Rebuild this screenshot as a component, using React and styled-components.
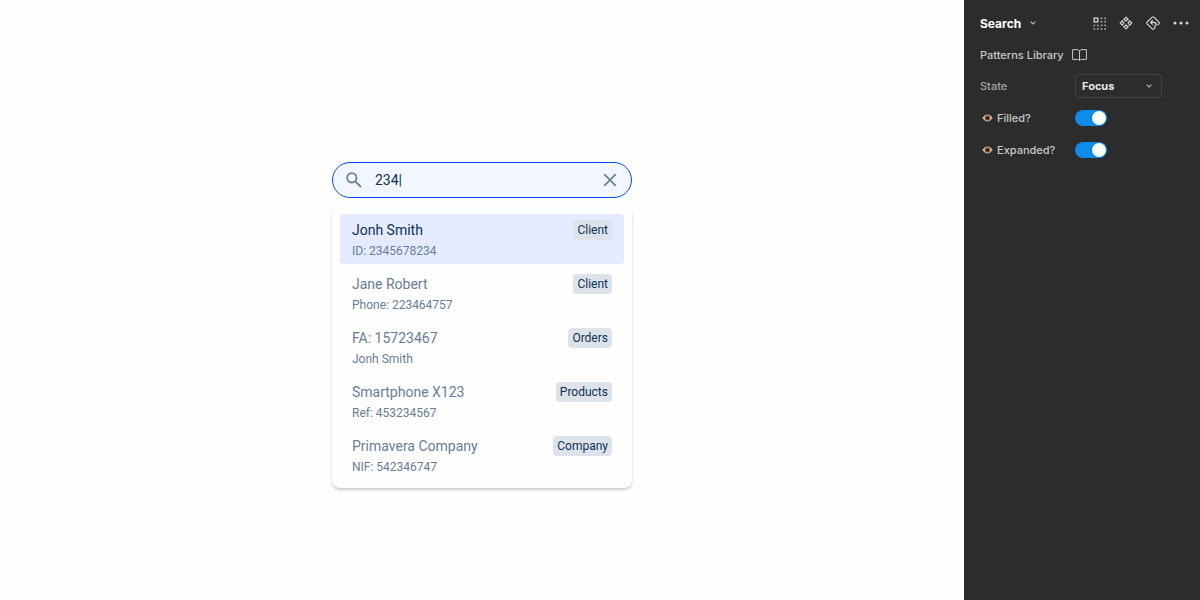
import { useState } from "react";
import styled, { createGlobalStyle } from "styled-components";

const results = [
  { title: "Jonh Smith", detail: "ID: 2345678234", tag: "Client" },
  { title: "Jane Robert", detail: "Phone: 223464757", tag: "Client" },
  { title: "FA: 15723467", detail: "Jonh Smith", tag: "Orders" },
  { title: "Smartphone X123", detail: "Ref: 453234567", tag: "Products" },
  { title: "Primavera Company", detail: "NIF: 542346747", tag: "Company" },
];

const SearchIcon = () => (
  <svg width="16" height="16" viewBox="0 0 16 16" fill="none" stroke="currentColor" strokeWidth="1.8">
    <circle cx="5.8" cy="5.8" r="4.7" />
    <path d="M9.3 9.3L15 15" />
  </svg>
);

const CloseIcon = () => (
  <svg width="14" height="14" viewBox="0 0 14 14" fill="none" stroke="currentColor" strokeWidth="1.7">
    <path d="M1.2 1.2L12.8 12.8M12.8 1.2L1.2 12.8" />
  </svg>
);

const ChevronIcon = () => (
  <svg width="6" height="4" viewBox="0 0 6 4" fill="none" stroke="#b8b8b8" strokeWidth="1.1">
    <path d="M0.6 0.6L3 3L5.4 0.6" />
  </svg>
);

const GridIcon = () => (
  <svg width="13" height="13" viewBox="0 0 13 13" fill="none" stroke="currentColor">
    <rect x="1.1" y="1.1" width="3.8" height="3.8" strokeWidth="1.3" />
    <path
      strokeWidth="0.9"
      d="M8.2 2.2V1H9.4M11.2 1H12.4V2.2M12.4 3.8V5H11.2M9.4 5H8.2V3.8M8.2 9.3V8.1H9.4M11.2 8.1H12.4V9.3M12.4 11V12.2H11.2M9.4 12.2H8.2V11M1 9.3V8.1H2.2M3.9 8.1H5.1V9.3M5.1 11V12.2H3.9M2.2 12.2H1V11"
    />
  </svg>
);

const ComponentIcon = () => (
  <svg width="14" height="14" viewBox="0 0 14 14" fill="none" stroke="currentColor" strokeWidth="1.2">
    <path
      strokeLinejoin="round"
      d="M7 1.2L8.9 3.1L7 5L5.1 3.1ZM7 9L8.9 10.9L7 12.8L5.1 10.9ZM3.1 5.1L5 7L3.1 8.9L1.2 7ZM10.9 5.1L12.8 7L10.9 8.9L9 7Z"
    />
    <path strokeWidth="0.9" d="M5.1 3.1L3.1 5.1M8.9 3.1L10.9 5.1M5.1 10.9L3.1 8.9M8.9 10.9L10.9 8.9" />
  </svg>
);

const ResetIcon = () => (
  <svg width="14" height="14" viewBox="0 0 14 14" fill="none" stroke="currentColor" strokeWidth="1.2">
    <path d="M9.2 11.5L7.8 12.9Q7 13.6 6.2 12.9L1.1 7.8Q0.4 7 1.1 6.2L6.2 1.1Q7 0.4 7.8 1.1L12.9 6.2Q13.6 7 12.9 7.8L11.6 9.1" />
    <path d="M6.8 4.2L4.6 6.4L6.8 8.6M4.8 6.4H8Q10.2 6.6 10.2 8.6Q10 10.4 7.8 10.4" />
  </svg>
);

const MoreIcon = () => (
  <svg width="16" height="4" viewBox="0 0 16 4" fill="currentColor">
    <circle cx="2" cy="2" r="1.5" />
    <circle cx="8" cy="2" r="1.5" />
    <circle cx="14" cy="2" r="1.5" />
  </svg>
);

const BookIcon = () => (
  <svg width="15" height="12" viewBox="0 0 15 12" fill="none" stroke="currentColor" strokeLinejoin="round">
    <path d="M7.5 2Q6.8 0.6 5 0.6H0.6V10.4H5.4Q6.9 10.4 7.5 11.5Q8.1 10.4 9.6 10.4H14.4V0.6H10Q8.2 0.6 7.5 2ZM7.5 2V11.4" />
  </svg>
);

const EyeIcon = () => (
  <svg width="11" height="8" viewBox="0 0 11 8">
    <path d="M0.4 4Q2.6 0.6 5.5 0.6Q8.4 0.6 10.6 4Q8.4 7.4 5.5 7.4Q2.6 7.4 0.4 4Z" fill="#cfc0b8" />
    <circle cx="5.5" cy="4" r="2.8" fill="#a4532f" />
    <circle cx="5.5" cy="4" r="1.6" fill="#24160f" />
  </svg>
);

const App = () => {
  const [query, setQuery] = useState("234|");
  const [state, setState] = useState("Focus");
  const [filled, setFilled] = useState(true);
  const [expanded, setExpanded] = useState(true);

  return (
    <Container>
      <GlobalStyle />
      <Stage>
        <Search>
          <SearchField>
            <SearchIcon />
            <SearchInput
              aria-label="Search"
              value={query}
              onChange={(e) => setQuery(e.target.value)}
            />
            <IconButton aria-label="Clear" onClick={() => setQuery("")}>
              <CloseIcon />
            </IconButton>
          </SearchField>
          <ResultList>
            {results.map((result, index) => (
              <li key={result.title}>
                <Result $active={index === 0}>
                  <ResultText>
                    <Title $active={index === 0}>{result.title}</Title>
                    <Detail>{result.detail}</Detail>
                  </ResultText>
                  <Tag>{result.tag}</Tag>
                </Result>
              </li>
            ))}
          </ResultList>
        </Search>
      </Stage>
      <Panel>
        <PanelHeader>
          <PanelTitle>
            Search
            <ChevronIcon />
          </PanelTitle>
          <Actions>
            <IconButton aria-label="Variants">
              <GridIcon />
            </IconButton>
            <IconButton aria-label="Main component">
              <ComponentIcon />
            </IconButton>
            <IconButton aria-label="Reset">
              <ResetIcon />
            </IconButton>
            <IconButton aria-label="More">
              <MoreIcon />
            </IconButton>
          </Actions>
        </PanelHeader>
        <LibraryLink href="#library">
          Patterns Library
          <BookIcon />
        </LibraryLink>
        <Property>
          <StateLabel htmlFor="state">State</StateLabel>
          <SelectBox>
            <Select id="state" value={state} onChange={(e) => setState(e.target.value)}>
              <option>Focus</option>
            </Select>
            <ChevronIcon />
          </SelectBox>
        </Property>
        <Property>
          <Label htmlFor="filled">
            <EyeIcon />
            Filled?
          </Label>
          <Toggle id="filled" checked={filled} onChange={() => setFilled(!filled)} />
        </Property>
        <Property>
          <Label htmlFor="expanded">
            <EyeIcon />
            Expanded?
          </Label>
          <Toggle id="expanded" checked={expanded} onChange={() => setExpanded(!expanded)} />
        </Property>
      </Panel>
    </Container>
  );
};

const GlobalStyle = createGlobalStyle`
  * {
    box-sizing: border-box;
  }

  body {
    margin: 0;
    background-color: #fefefe;
  }

  svg {
    display: block;
    flex-shrink: 0;
  }
`;

const Container = styled.div`
  min-height: 100vh;
  display: flex;
`;

const Stage = styled.main`
  flex: 1;
  padding: 162px 24px 24px;
  font-family: Roboto, sans-serif;
`;

const Search = styled.div`
  max-width: 300px;
  margin: 0 auto;

  display: flex;
  flex-direction: column;
  gap: 8px;
`;

const SearchField = styled.div`
  height: 36px;
  padding: 0 14px 0 13px;
  border: 1px solid #0047ff;
  border-radius: 18px;
  background-color: #f2f7ff;
  color: #6b7f95;

  display: flex;
  align-items: center;
  gap: 13px;
`;

const SearchInput = styled.input`
  flex: 1;
  min-width: 0;
  padding: 0;
  border: none;
  outline: none;
  background: none;
  color: #0a3259;
  font-family: inherit;
  font-size: 14px;
  line-height: 20px;
`;

const IconButton = styled.button`
  padding: 0;
  border: none;
  background: none;
  color: inherit;
  cursor: pointer;
`;

const ResultList = styled.ul`
  margin: 0;
  padding: 8px;
  border-radius: 8px;
  box-shadow: 0 2px 3px rgba(0, 0, 0, 0.2);
  list-style: none;

  display: flex;
  flex-direction: column;
  gap: 4px;
`;

const Result = styled.button`
  width: 100%;
  height: 50px;
  padding: 6px 12px;
  border: none;
  border-radius: 4px;
  background-color: ${(props) => (props.$active ? "#e5ebff" : "transparent")};
  font-family: inherit;
  text-align: left;
  cursor: pointer;

  display: flex;
  align-items: flex-start;
  justify-content: space-between;
`;

const ResultText = styled.span`
  display: flex;
  flex-direction: column;
  gap: 3px;
`;

const Title = styled.span`
  color: ${(props) => (props.$active ? "#0a3259" : "#677d96")};
  font-size: 14px;
  line-height: 20px;
`;

const Detail = styled.span`
  color: #677d96;
  font-size: 12px;
  line-height: 16px;
`;

const Tag = styled.span`
  padding: 0 4px;
  border-radius: 4px;
  background-color: #dee3ea;
  color: #0a3259;
  font-size: 12px;
  line-height: 20px;
`;

const Panel = styled.aside`
  width: 236px;
  padding: 11px 11px 12px 16px;
  background-color: #2c2c2c;
  color: #c8c8c8;
  font-family: Inter, sans-serif;
  font-size: 11px;
  font-weight: 500;

  display: flex;
  flex-direction: column;
  gap: 8px;
`;

const PanelHeader = styled.header`
  height: 24px;
  color: #d8d8d8;

  display: flex;
  align-items: center;
  justify-content: space-between;
`;

const PanelTitle = styled.h1`
  margin: 0;
  color: white;
  font-size: 12px;
  font-weight: 700;

  display: flex;
  align-items: center;
  gap: 9px;
`;

const Actions = styled.div`
  display: flex;
  align-items: center;
  gap: 13px;
`;

const LibraryLink = styled.a`
  height: 23px;
  color: inherit;
  text-decoration: none;

  display: flex;
  align-items: center;
  gap: 8px;
`;

const Property = styled.div`
  height: 24px;

  display: grid;
  grid-template-columns: 95px 87px;
  align-items: center;
`;

const Label = styled.label`
  padding-left: 2px;

  display: flex;
  align-items: center;
  gap: 4px;
`;

const StateLabel = styled.label`
  color: #a6a6a6;
`;

const SelectBox = styled.div`
  height: 24px;
  padding-right: 9px;
  border: 1px solid #434343;
  border-radius: 4px;
  color: #e6e6e6;

  display: flex;
  align-items: center;
`;

const Select = styled.select`
  flex: 1;
  min-width: 0;
  padding: 0 0 0 6px;
  border: none;
  outline: none;
  appearance: none;
  background: none;
  color: inherit;
  font-family: inherit;
  font-size: 11px;
  font-weight: 700;
`;

const Toggle = styled.input.attrs({ type: "checkbox", role: "switch" })`
  width: 32px;
  height: 16px;
  margin: 0;
  padding: 1px;
  border-radius: 8px;
  appearance: none;
  background-color: #5a5a5a;
  cursor: pointer;

  display: flex;

  &::before {
    content: "";
    width: 14px;
    height: 14px;
    border-radius: 50%;
    background-color: white;
  }

  &:checked {
    justify-content: flex-end;
    background-color: #0d8ce9;
  }
`;

export default App;
